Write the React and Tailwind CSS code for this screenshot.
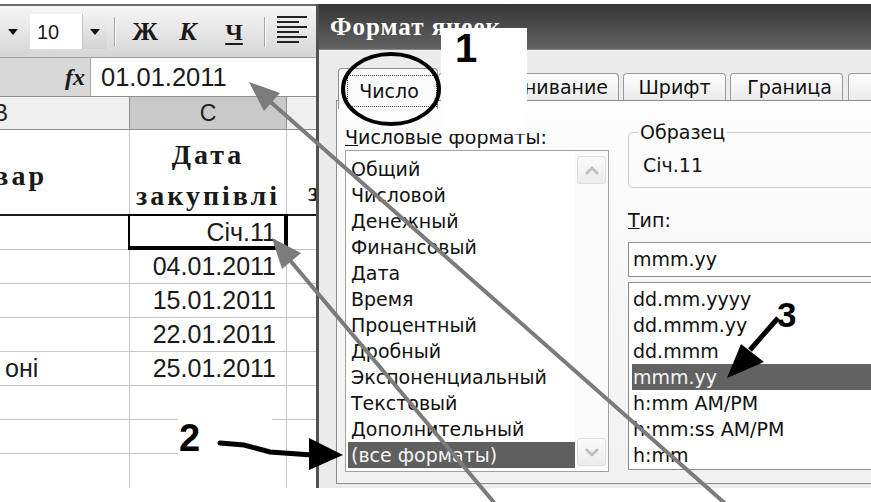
import React from "react";

const categories = [
  "Общий",
  "Числовой",
  "Денежный",
  "Финансовый",
  "Дата",
  "Время",
  "Процентный",
  "Дробный",
  "Экспоненциальный",
  "Текстовый",
  "Дополнительный",
  "(все форматы)",
];

const types = ["dd.mm.yyyy", "dd.mmm.yy", "dd.mmm", "mmm.yy", "h:mm AM/PM", "h:mm:ss AM/PM", "h:mm"];

function Caret() {
  return (
    <svg width="10" height="6" viewBox="0 0 10 6">
      <path d="M0 0h10L5 6z" fill="#111" />
    </svg>
  );
}

function Sep() {
  return <div className="w-[2px] h-[30px] border-l border-r border-l-[#a4a4a4] border-r-white" />;
}

function AlignLeft() {
  return (
    <svg width="30" height="30" viewBox="0 0 30 30">
      {[2, 7, 12, 17, 22, 27].map((y, i) => (
        <rect key={y} x="0" y={y} width={i % 2 ? 22 : 30} height="2" fill="#222" />
      ))}
    </svg>
  );
}

function Row({ b, c, selected, last }) {
  return (
    <div className={`h-[34px] shrink-0 flex ${last ? "" : "border-b border-[#c6c6c6]"}`}>
      <div className="w-[130px] shrink-0 border-r border-[#c6c6c6] flex items-center pl-[5px]">{b}</div>
      <div className="relative w-[157px] shrink-0 border-r border-[#c6c6c6] flex items-center justify-end pr-[10px]">
        {c}
        {selected && (
          <div className="absolute -left-[2px] -top-[2px] -right-[2px] -bottom-px border-2 border-r-4 border-b-4 border-black" />
        )}
      </div>
      <div className="flex-1" />
    </div>
  );
}

function Sheet() {
  return (
    <div className="w-[316px] shrink-0 flex flex-col overflow-hidden font-['Liberation_Sans',Arial,sans-serif] text-[#1a1a1a]">
      {/* toolbar */}
      <div className="h-[54px] shrink-0 border-t-2 border-b border-t-[#6b6b6b] border-b-[#9c9c9c] bg-linear-to-b from-[#f6f6f6] to-[#d6d6d6] flex items-center">
        <div className="w-[25px] h-[35px] flex items-center justify-center">
          <Caret />
        </div>
        <div className="ml-[5px] w-[52px] h-[35px] bg-white flex items-center pl-[7px] text-[20px]">10</div>
        <div className="w-[25px] h-[35px] bg-linear-to-b from-[#f2f2f2] to-[#d2d2d2] border-l border-[#c8c8c8] flex items-center justify-center">
          <Caret />
        </div>
        <div className="ml-[7px]">
          <Sep />
        </div>
        <div className="ml-[14px] w-[30px] text-center font-['Liberation_Serif',serif] font-bold text-[26px]">Ж</div>
        <div className="ml-[13px] w-[30px] text-center font-['Liberation_Serif',serif] font-bold italic text-[26px]">К</div>
        <div className="ml-[16px] w-[30px] text-center font-['Liberation_Serif',serif] font-bold text-[24px] underline decoration-2 underline-offset-[3px]">
          Ч
        </div>
        <div className="ml-[15px]">
          <Sep />
        </div>
        <div className="ml-[11px] self-start mt-[8px]">
          <AlignLeft />
        </div>
      </div>

      {/* formula bar */}
      <div className="h-[38px] shrink-0 flex">
        <div className="w-[90px] bg-[#d8d8d8] flex items-center justify-end pr-[5px] font-['Liberation_Serif',serif] italic font-bold text-[24px]">
          fx
        </div>
        <div className="flex-1 bg-white border-l border-[#a8a8a8] flex items-center pl-[10px] text-[25.5px]">01.01.2011</div>
      </div>

      {/* column headers */}
      <div className="h-[34px] shrink-0 flex border-t border-b border-[#8f8f8f] text-[23px] text-[#222]">
        <div className="w-[130px] shrink-0 bg-[#efefef] border-r border-[#8f8f8f] flex items-center justify-end pr-[121px] overflow-hidden">
          B
        </div>
        <div className="w-[157px] shrink-0 bg-[#c9c9c9] border-r border-[#8f8f8f] flex items-center justify-center">C</div>
        <div className="flex-1 bg-[#efefef]" />
      </div>

      {/* header row of the table */}
      <div className="h-[86px] shrink-0 flex border-b-2 border-[#1c1c1c] font-['Liberation_Serif',serif] font-bold text-[28px] tracking-[3px]">
        <div className="w-[130px] shrink-0 border-r border-[#c6c6c6] flex items-center justify-end pr-[82px] pt-[8px] overflow-hidden whitespace-nowrap">
          Товар
        </div>
        <div className="w-[157px] shrink-0 border-r border-[#c6c6c6] flex flex-col items-center pt-[4px] leading-[41px]">
          <span>Дата</span>
          <span>закупівлі</span>
        </div>
        <div className="flex-1 flex items-end pl-[21px] pb-[2px] leading-[41px] whitespace-nowrap">за</div>
      </div>

      <div className="text-[25px]">
        <Row c="Січ.11" selected />
        <Row c="04.01.2011" />
        <Row c="15.01.2011" />
        <Row c="22.01.2011" />
        <Row b="оні" c="25.01.2011" />
        <Row />
        <Row />
        <Row last />
      </div>
    </div>
  );
}

function ScrollBtn({ up }) {
  return (
    <div className="w-[29px] h-[28px] rounded-[3px] border border-[#dedede] bg-linear-to-b from-[#fbfbfb] to-[#ececec] flex items-center justify-center">
      <svg width="14" height="9" viewBox="0 0 14 9">
        <path d={up ? "M1 8 7 2l6 6" : "M1 1l6 6 6-6"} stroke="#bdbdbd" strokeWidth="2.5" fill="none" />
      </svg>
    </div>
  );
}

function Dialog() {
  return (
    <div className="w-[640px] shrink-0 flex flex-col border-l-[3px] border-[#515151] bg-[#ececec] font-['DejaVu_Sans',sans-serif] text-[19px] text-[#111]">
      <div className="h-[46px] shrink-0 bg-linear-to-b from-[#363636] to-[#636363] border-b border-[#8a8a8a] flex items-center pl-[11px] text-white font-['Liberation_Serif',serif] font-bold text-[25px] tracking-[1px]">
        Формат ячеек
      </div>

      <div className="flex-1 flex flex-col pl-[17px] pt-[18px] pb-[4px]">
        {/* tabs */}
        <div className="h-[41px] shrink-0 flex items-end -mb-[9px] relative z-10 leading-[22px]">
          <div className="ml-[2px] w-[102px] h-[41px] rounded-t-[4px] border border-b-0 border-[#8e8e8e] bg-[#fcfcfc] pl-[8px] pt-[6px]">
            <span className="w-[90px] h-[32px] border border-dotted border-[#444] flex items-center justify-center pr-[6px]">Число</span>
          </div>
          <div className="mb-[9px] w-[184px] h-[27px] rounded-t-[4px] border border-b-0 border-[#9a9a9a] bg-linear-to-b from-[#fefefe] to-[#ebebeb] flex items-center justify-end pr-[10px]">
            Выравнивание
          </div>
          <div className="mb-[9px] ml-[4px] w-[105px] h-[27px] rounded-t-[4px] border border-b-0 border-[#9a9a9a] bg-linear-to-b from-[#fefefe] to-[#ebebeb] flex items-center justify-center">
            Шрифт
          </div>
          <div className="mb-[9px] ml-[4px] w-[115px] h-[27px] rounded-t-[4px] border border-b-0 border-[#9a9a9a] bg-linear-to-b from-[#fefefe] to-[#ebebeb] flex items-center justify-center pl-[6px]">
            Граница
          </div>
          <div className="mb-[9px] ml-[5px] w-[110px] h-[27px] rounded-t-[4px] border border-b-0 border-[#9a9a9a] bg-linear-to-b from-[#fefefe] to-[#ebebeb]" />
        </div>

        {/* tab page */}
        <div className="flex-1 flex pl-[8px] border border-[#8e8e8e] bg-linear-to-b from-[#fdfdfd] to-[#f1f1f1]">
          <div className="w-[264px] shrink-0 flex flex-col pt-[25px] pb-[11px]">
            <div className="leading-[22px] whitespace-nowrap">
              <span className="underline">Ч</span>исловые форматы:
            </div>
            <div className="mt-[2px] flex-1 flex border border-[#a2a2a2] bg-white">
              <div className="flex-1 pt-[5px]">
                {categories.map((name, i) => (
                  <div
                    key={name}
                    className={`ml-[2px] h-[26px] leading-[26px] pl-[3px] whitespace-nowrap ${
                      i === categories.length - 1 ? "bg-[#5f5f5f] text-[#f4f4f4]" : ""
                    }`}
                  >
                    {name}
                  </div>
                ))}
              </div>
              <div className="w-[33px] shrink-0 flex flex-col justify-between items-center py-[5px] bg-[#fbfbfb]">
                <ScrollBtn up />
                <ScrollBtn />
              </div>
            </div>
          </div>

          <div className="ml-[19px] w-[300px] shrink-0 flex flex-col pt-[20px] pb-[13px]">
            <fieldset className="border border-[#cdcdcd] rounded-[5px] pb-[11px]">
              <legend className="ml-[9px] px-[2px] leading-[22px]">Образец</legend>
              <div className="pl-[14px] pt-[11px] leading-[22px]">Січ.11</div>
            </fieldset>
            <div className="mt-[21px] leading-[22px]">
              <span className="underline">Т</span>ип:
            </div>
            <div className="mt-[11px] h-[35px] shrink-0 border border-[#8c8c8c] bg-white flex items-center pl-[4px]">mmm.yy</div>
            <div className="mt-[5px] flex-1 border border-[#8c8c8c] bg-white pt-[3px]">
              {types.map((t, i) => (
                <div
                  key={t}
                  className={`ml-[3px] h-[26px] leading-[26px] pl-px whitespace-nowrap ${
                    i === 3 ? "bg-[#626262] text-[#f4f4f4]" : ""
                  }`}
                >
                  {t}
                </div>
              ))}
            </div>
          </div>
        </div>
      </div>
    </div>
  );
}

export default function App() {
  return (
    <div className="relative w-[871px] h-[502px] overflow-hidden bg-white">
      <div className="flex pt-[4px] h-[488px]">
        <Sheet />
        <Dialog />
      </div>

      {/* callout labels */}
      <div className="absolute z-20 left-[441px] top-[28px] w-[86px] h-[106px] bg-white" />
      <div className="absolute z-20 left-[455px] top-[28px] font-['Liberation_Sans',Arial,sans-serif] font-bold text-[40px] leading-none">1</div>
      <div className="absolute z-20 left-[178px] top-[414px] w-[94px] h-[56px] bg-white" />
      <div className="absolute z-20 left-[179px] top-[419px] font-['Liberation_Sans',Arial,sans-serif] font-bold text-[38px] leading-none">2</div>
      <div className="absolute z-20 left-[777px] top-[297px] font-['Liberation_Sans',Arial,sans-serif] font-bold text-[35px] leading-none">3</div>

      <svg className="absolute z-30 inset-0 pointer-events-none" width="871" height="502" viewBox="0 0 871 502">
        <ellipse cx="391" cy="89" rx="48" ry="35" fill="none" stroke="#000" strokeWidth="4" />
        <path d="M220 443 L244 445 L270 452 L312 455" stroke="#000" strokeWidth="5" fill="none" strokeLinecap="round" />
        <path d="M309 438 L343 455 L309 470 Z" fill="#000" />
        <path d="M778 318 L750 350" stroke="#000" strokeWidth="5" />
        <path d="M727 378 L741 344 L764 362 Z" fill="#000" />
        <g fill="#7b7b7b" stroke="#7b7b7b">
          <path d="M728 506 L265 97" strokeWidth="4" />
          <path d="M249 82 L280 93 L264 111 Z" stroke="none" />
          <path d="M497 506 L283 252" strokeWidth="4" />
          <path d="M272 238 L301 253 L282 269 Z" stroke="none" />
        </g>
      </svg>
    </div>
  );
}
